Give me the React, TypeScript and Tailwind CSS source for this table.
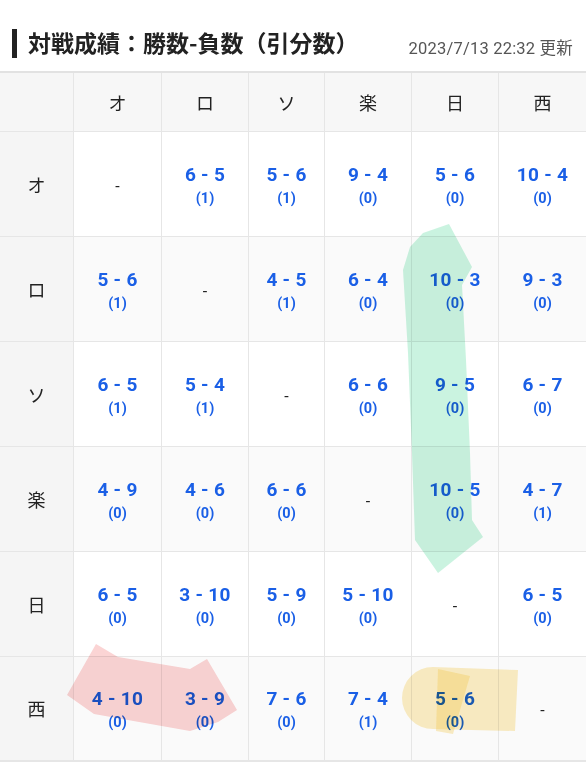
import React from 'react';

const teams = ['オ', 'ロ', 'ソ', '楽', '日', '西'];

// [win, loss, draw] or null for self
const results: (number[] | null)[][] = [
  [null, [6, 5, 1], [5, 6, 1], [9, 4, 0], [5, 6, 0], [10, 4, 0]],
  [[5, 6, 1], null, [4, 5, 1], [6, 4, 0], [10, 3, 0], [9, 3, 0]],
  [[6, 5, 1], [5, 4, 1], null, [6, 6, 0], [9, 5, 0], [6, 7, 0]],
  [[4, 9, 0], [4, 6, 0], [6, 6, 0], null, [10, 5, 0], [4, 7, 1]],
  [[6, 5, 0], [3, 10, 0], [5, 9, 0], [5, 10, 0], null, [6, 5, 0]],
  [[4, 10, 0], [3, 9, 0], [7, 6, 0], [7, 4, 1], [5, 6, 0], null],
];

const font = { fontFamily: 'Roboto, "Noto Sans CJK JP", sans-serif' };
const jp = { fontFamily: '"Noto Sans CJK JP", sans-serif' };

const App: React.FC = () => {
  return (
    <div className="relative w-[586px] h-[774px] bg-white overflow-hidden" style={font}>
      {/* title */}
      <div className="h-[71px] flex items-center justify-between pl-[12px] pr-[13px]">
        <div className="flex items-center">
          <div className="w-[5px] h-[29px] bg-[#222] mr-[11px] mt-[15px]" />
          <h1 className="text-[23px] font-bold text-[#222] mt-[14px]" style={jp}>
            対戦成績：勝数-負数（引分数）
          </h1>
        </div>
        <div className="text-[16.5px] text-[#555] mt-[25px] tracking-[0.2px]">
          2023/7/13 22:32 <span style={jp}>更新</span>
        </div>
      </div>

      {/* table */}
      <div className="grid grid-cols-[74px_88px_87px_76px_87px_87px_87px] border-t-2 border-[#e2e2e2]">
        <div className="h-[59px] bg-[#f6f6f6] border-r border-b border-[#e6e6e6]" />
        {teams.map((t, i) => (
          <div
            key={t}
            className={`h-[59px] bg-[#f7f7f7] border-b border-[#e6e6e6] flex items-center justify-center text-[18px] text-[#222] ${i < 5 ? 'border-r' : ''}`}
            style={jp}
          >
            {t}
          </div>
        ))}

        {results.map((row, r) => (
          <React.Fragment key={r}>
            <div
              className={`h-[105px] bg-[#f5f5f5] border-r border-[#e6e6e6] flex items-center justify-center text-[18px] text-[#222] ${r === 5 ? 'border-b-2' : 'border-b'}`}
              style={jp}
            >
              {teams[r]}
            </div>
            {row.map((c, i) => (
              <div
                key={i}
                className={`h-[105px] border-[#e6e6e6] flex flex-col items-center justify-center pt-[5px] ${r % 2 === 1 ? 'bg-[#fafafa]' : 'bg-white'} ${i < 5 ? 'border-r' : ''} ${r === 5 ? 'border-b-2' : 'border-b'}`}
              >
                {c ? (
                  <>
                    <div className="text-[19px] leading-[24px] font-bold text-[#1a5fe6] tracking-[0.3px]">
                      {c[0]} - {c[1]}
                    </div>
                    <div className="text-[14.5px] leading-[24px] font-bold text-[#1a5fe6]">({c[2]})</div>
                  </>
                ) : (
                  <div className="text-[16px] text-[#222]">-</div>
                )}
              </div>
            ))}
          </React.Fragment>
        ))}
      </div>

      {/* highlighter marks */}
      <svg className="absolute inset-0 pointer-events-none mix-blend-multiply" width="586" height="774" viewBox="0 0 586 774">
        <path
          d="M449 224 L472 267 L462 285 L466 360 L470 453 L472 520 L483 537 L438 573 L415 540 L412 453 L408 353 L403 270 L410 247 L423 233 Z"
          fill="rgba(60,210,140,0.27)"
        />
        <path
          d="M96 644 L118 657 L190 669 L207 659 L237 710 L218 722 L190 731 L94 714 L67 695 Z"
          fill="rgba(240,100,100,0.28)"
        />
        <path
          d="M433 667 L518 670 L515 731 L433 729 A31 31 0 0 1 433 667 Z"
          fill="rgba(245,200,60,0.3)"
        />
        <path d="M438 669 L470 676 L453 734 L436 731 Z" fill="rgba(245,200,60,0.3)" />
      </svg>
    </div>
  );
};

export default App;
